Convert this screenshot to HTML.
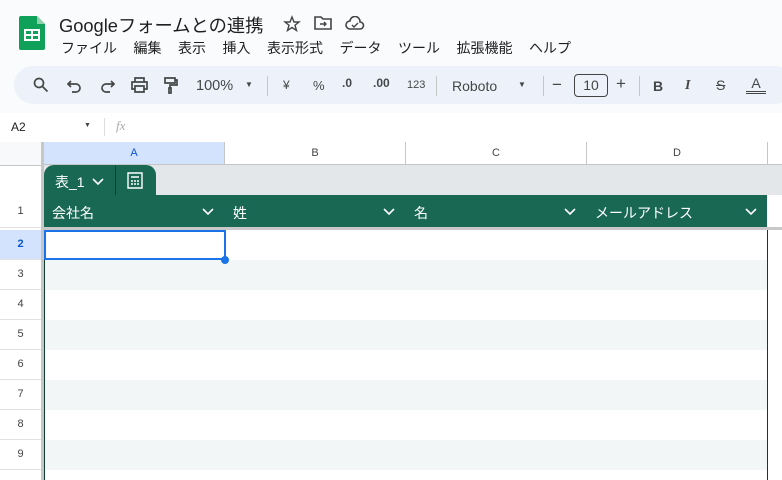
<!DOCTYPE html><html><head><meta charset="utf-8"><style>
body{margin:0;width:782px;height:480px;overflow:hidden;background:#f9fbfd;font-family:"Liberation Sans","Noto Sans CJK JP",sans-serif;position:relative;color:#1f1f1f}
.a{position:absolute}
.m span{margin-right:16.5px}
.tb{position:absolute;left:14px;top:66px;width:780px;height:38px;background:#edf2fa;border-radius:19px}
.ic{position:absolute;top:76px;font-size:14px;color:#444746}
.sep{position:absolute;top:76px;width:1px;height:20px;background:#c7c7c7}
.rh{position:absolute;left:0;width:41px;text-align:center;font-size:11px;color:#444;border-bottom:1px solid #e1e1e1}
.row{position:absolute;left:44px;width:723px;height:30px}
.sv{position:absolute;fill:none;stroke:#444746;stroke-width:1.7}
.ch{position:absolute;top:208px;fill:none;stroke:#fff;stroke-width:1.6}
</style></head><body>
<svg class="a" style="left:19px;top:16px" width="26" height="34" viewBox="0 0 26 34"><path d="M2 0h16l8 8v24a2 2 0 0 1-2 2H2a2 2 0 0 1-2-2V2a2 2 0 0 1 2-2z" fill="#0fa15a"/><path d="M18 0v8h8z" fill="#8ed1ad"/><rect x="6" y="14" width="14" height="10" fill="none" stroke="#fff" stroke-width="2"/><path d="M6 19h14M13 14v10" stroke="#fff" stroke-width="2"/></svg>
<div class="a" style="left:59px;top:12px;font-size:18.3px">Googleフォームとの連携</div>
<svg class="sv" style="left:283px;top:15px" width="18" height="18"><path d="M9 2l2 5h5l-4 3.2 1.5 5.3L9 12.5 4.5 15.5 6 10.2 2 7h5z" stroke-width="1.4"/></svg>
<svg class="a" style="left:314px;top:16px" width="18" height="14"><path d="M1 1h6l2 2h8v10H1z" fill="none" stroke="#444" stroke-width="1.6"/><path d="M6 8h6M10 6l2 2-2 2" stroke="#444" stroke-width="1.4" fill="none"/></svg>
<svg class="a" style="left:345px;top:16px" width="20" height="14"><path d="M5 13a4 4 0 0 1 0-8 5 5 0 0 1 10 1 3.5 3.5 0 0 1 0 7z" fill="none" stroke="#444" stroke-width="1.6"/><path d="M7 9l2 2 4-4" fill="none" stroke="#444" stroke-width="1.4"/></svg>
<div class="a m" style="left:61px;top:38px;font-size:14px;white-space:nowrap"><span>ファイル</span><span>編集</span><span>表示</span><span>挿入</span><span>表示形式</span><span>データ</span><span>ツール</span><span>拡張機能</span><span>ヘルプ</span></div>
<div class="tb"></div>
<svg class="sv" style="left:33px;top:77px" width="16" height="16"><circle cx="6" cy="6" r="4.5"/><path d="M9.5 9.5l5 5"/></svg>
<svg class="sv" style="left:67px;top:79px" width="16" height="14"><path d="M4 2L1 5l3 3M1 5h8a4 4 0 0 1 0 8H5"/></svg>
<svg class="sv" style="left:99px;top:79px" width="16" height="14"><path d="M12 2l3 3-3 3M15 5H7a4 4 0 0 0 0 8h4"/></svg>
<svg class="sv" style="left:131px;top:77px" width="17" height="16"><path d="M4 5V1h9v4M4 12H1V5h15v7h-3M4 9h9v6H4z"/></svg>
<svg class="sv" style="left:164px;top:77px" width="14" height="17"><path d="M1 1h10v5H1zM11 3h2v5H6v3M5 11h2v5H5z"/></svg>
<div class="ic" style="left:196px;top:78px;font-size:14.5px">100%</div>
<div class="ic" style="left:245px;top:80px;font-size:8px">▼</div>
<div class="sep" style="left:267px"></div>
<div class="ic" style="left:283px;top:78px;font-size:12px">¥</div>
<div class="ic" style="left:313px;top:78px;font-size:13px">%</div>
<div class="ic" style="left:342px;top:76px;font-size:12px;font-weight:bold">.0</div>
<div class="ic" style="left:373px;top:76px;font-size:12px;font-weight:bold">.00</div>
<div class="ic" style="left:407px;top:79px;font-size:11px">123</div>
<div class="sep" style="left:436px"></div>
<div class="ic" style="left:452px;top:78px">Roboto</div>
<div class="ic" style="left:518px;top:80px;font-size:8px">▼</div>
<div class="sep" style="left:543px"></div>
<div class="ic" style="left:552px;top:75px;font-size:17px">−</div>
<div class="a" style="left:574px;top:74px;width:32px;height:21px;border:1px solid #444;border-radius:4px;font-size:14px;text-align:center;line-height:21px;color:#444">10</div>
<div class="ic" style="left:616px;top:74px;font-size:17px">+</div>
<div class="sep" style="left:639px"></div>
<div class="ic" style="left:653px;top:78px;font-weight:bold">B</div>
<div class="ic" style="left:685px;top:78px;font-style:italic;font-weight:bold;font-family:'Liberation Serif'">I</div>
<div class="ic" style="left:716px;top:77px;text-decoration:line-through">S</div>
<div class="ic" style="left:746px;top:75px;border-bottom:3px double #444;width:20px;text-align:center">A</div>
<div class="a" style="left:0;top:113px;width:782px;height:29px;background:#fff;border-bottom:1px solid #e1e1e1"></div>
<div class="a" style="left:11px;top:120px;font-size:12px">A2</div>
<div class="a" style="left:84px;top:122px;font-size:7px;color:#444">▼</div>
<div class="a" style="left:104px;top:118px;width:1px;height:18px;background:#ddd"></div>
<div class="a" style="left:116px;top:118px;font-size:13px;color:#aaa;font-style:italic;font-family:'Liberation Serif'">fx</div>
<div class="a" style="left:0;top:142px;width:782px;height:338px;background:#fff"></div>
<div class="a" style="left:0;top:142px;width:41px;height:23px;background:#f8f9fa;border-bottom:1px solid #c4c7c5"></div>
<div class="a" style="left:41px;top:142px;width:3px;height:338px;background:#c4c7c5"></div>
<div class="a" style="left:44px;top:142px;width:738px;height:23px;font-size:11px;color:#444">
<div class="a" style="left:0;width:180px;height:22px;background:#d3e3fd;border-right:1px solid #c4c7c5;border-bottom:1px solid #c4c7c5;text-align:center;line-height:22px;color:#0b57d0">A</div>
<div class="a" style="left:181px;width:180px;height:22px;border-right:1px solid #c4c7c5;border-bottom:1px solid #c4c7c5;text-align:center;line-height:22px">B</div>
<div class="a" style="left:362px;width:180px;height:22px;border-right:1px solid #c4c7c5;border-bottom:1px solid #c4c7c5;text-align:center;line-height:22px">C</div>
<div class="a" style="left:543px;width:180px;height:22px;border-right:1px solid #c4c7c5;border-bottom:1px solid #c4c7c5;text-align:center;line-height:22px">D</div>
<div class="a" style="left:724px;width:20px;height:22px;border-bottom:1px solid #c4c7c5"></div>
</div>
<div class="a" style="left:44px;top:165px;width:738px;height:30px;background:#e3e7ea"></div>
<div class="a" style="left:44px;top:165px;width:112px;height:30px;background:#186853;border-radius:10px 10px 0 0"></div>
<div class="a" style="left:115px;top:166px;width:1px;height:29px;background:#0c3d30"></div>
<div class="a" style="left:55px;top:172px;font-size:14px;color:#fff">表_1</div>
<svg class="ch" style="left:92px;top:178px" width="12" height="8"><path d="M1 1l5 5 5-5"/></svg>
<svg class="a" style="left:127px;top:172px" width="16" height="17"><path d="M1 3V1h2M3 1h12v15H1V3" fill="none" stroke="#fff" stroke-width="1.4"/><path d="M4 5h8M4 9h2M7 9h2M10 9h2M4 12h2M7 12h2M10 12h2" stroke="#fff" stroke-width="1.5"/></svg>
<div class="a" style="left:44px;top:195px;width:723px;height:32px;background:#186853;border-bottom:1px solid #0c3d30"></div>
<div class="a" style="left:44px;top:227px;width:738px;height:3px;background:#c8c8c8"></div>
<div class="a" style="left:52px;top:203px;font-size:14px;color:#fff">会社名</div>
<div class="a" style="left:233px;top:203px;font-size:14px;color:#fff">姓</div>
<div class="a" style="left:414px;top:203px;font-size:14px;color:#fff">名</div>
<div class="a" style="left:595px;top:203px;font-size:14px;color:#fff">メールアドレス</div>
<svg class="ch" style="left:202px" width="12" height="8"><path d="M1 1l5 5 5-5"/></svg>
<svg class="ch" style="left:383px" width="12" height="8"><path d="M1 1l5 5 5-5"/></svg>
<svg class="ch" style="left:564px" width="12" height="8"><path d="M1 1l5 5 5-5"/></svg>
<svg class="ch" style="left:745px" width="12" height="8"><path d="M1 1l5 5 5-5"/></svg>
<div class="row" style="top:260px;background:#f3f6f6"></div>
<div class="row" style="top:320px;background:#f3f6f6"></div>
<div class="row" style="top:380px;background:#f3f6f6"></div>
<div class="row" style="top:440px;background:#f3f6f6"></div>
<div class="a" style="left:44px;top:230px;width:1px;height:250px;background:#0c3d30"></div>
<div class="a" style="left:767px;top:230px;width:1px;height:250px;background:#0c3d30"></div>
<div class="rh" style="top:165px;height:29px;border-bottom:none"></div>
<div class="rh" style="top:195px;height:32px;line-height:32px">1</div>
<div class="rh" style="top:230px;height:29px;line-height:29px;background:#d3e3fd;color:#0b57d0;font-weight:bold">2</div>
<div class="rh" style="top:260px;height:29px;line-height:29px">3</div>
<div class="rh" style="top:290px;height:29px;line-height:29px">4</div>
<div class="rh" style="top:320px;height:29px;line-height:29px">5</div>
<div class="rh" style="top:350px;height:29px;line-height:29px">6</div>
<div class="rh" style="top:380px;height:29px;line-height:29px">7</div>
<div class="rh" style="top:410px;height:29px;line-height:29px">8</div>
<div class="rh" style="top:440px;height:29px;line-height:29px">9</div>
<div class="a" style="left:44px;top:230px;width:178px;height:26px;border:2px solid #1a73e8"></div>
<div class="a" style="left:221px;top:256px;width:8px;height:8px;border-radius:50%;background:#1a73e8"></div>
</body></html>
